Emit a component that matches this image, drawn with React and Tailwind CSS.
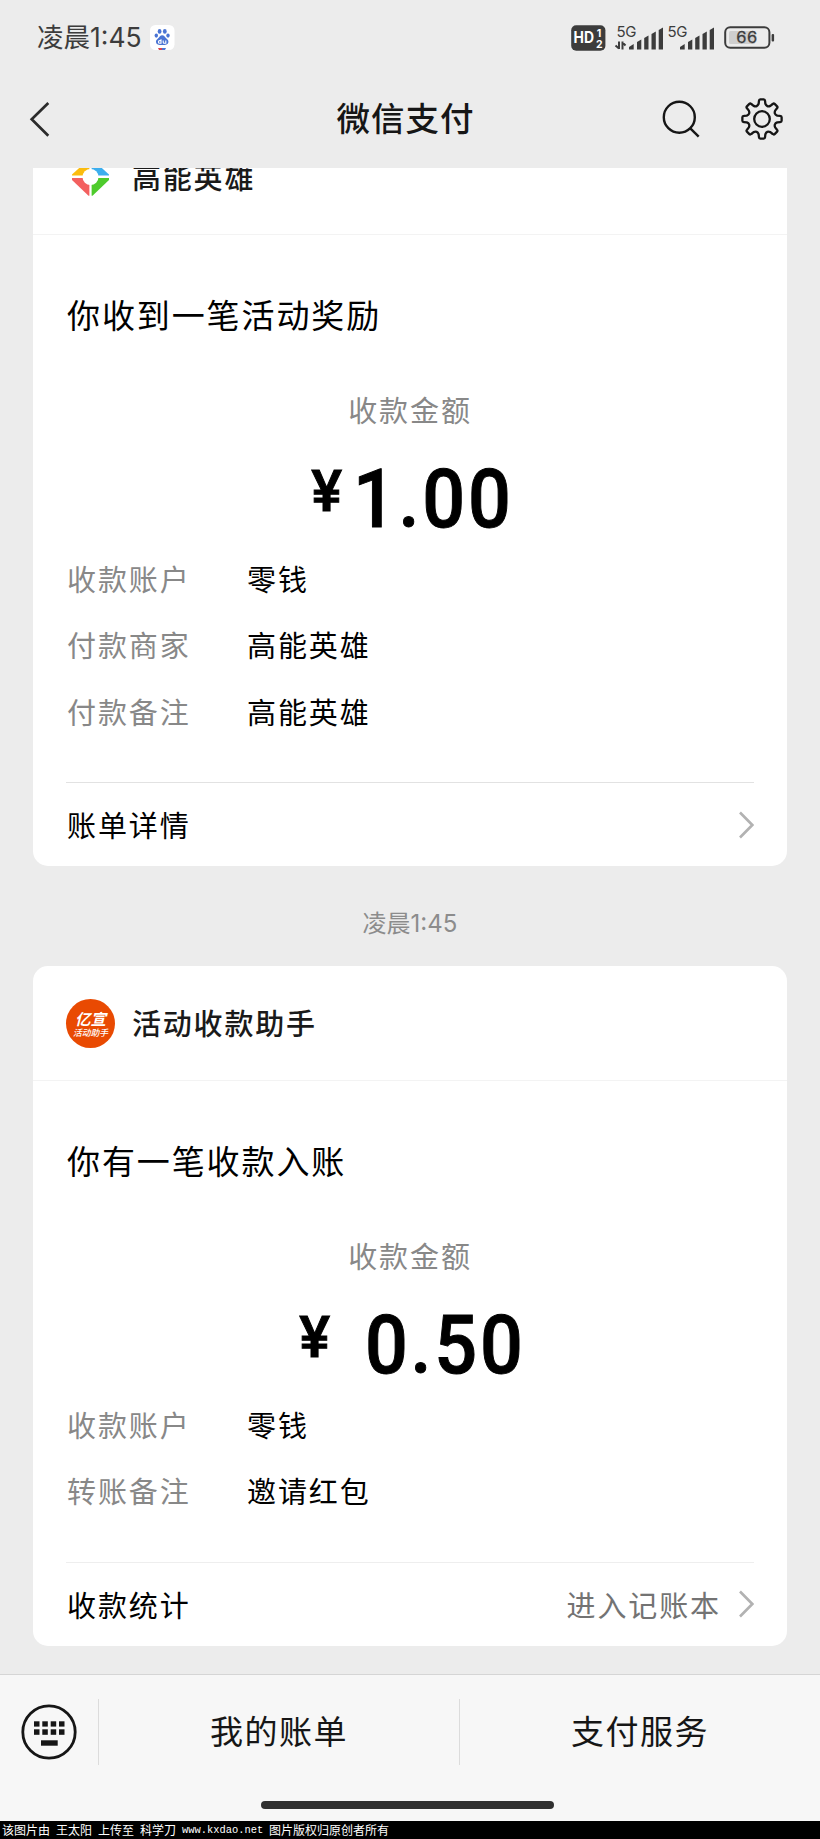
const GEAR_TEETH = 8;

// Outline of the settings cog, centred on 0,0
const gearPath = () => {
  const point = (radius, degrees) => {
    const a = ((degrees - 90) * Math.PI) / 180;
    return `${(radius * Math.cos(a)).toFixed(2)} ${(radius * Math.sin(a)).toFixed(2)}`;
  };
  let d = '';
  for (let i = 0; i < GEAR_TEETH; i++) {
    const a = i * 45;
    d += `${i === 0 ? 'M' : 'L'}${point(15.6, a - 12.5)} L${point(18.4, a - 9.5)} Q${point(19.8, a - 8.5)} ${point(19.7, a - 5)} `;
    d += `L${point(19.7, a + 5)} Q${point(19.8, a + 8.5)} ${point(18.4, a + 9.5)} L${point(15.6, a + 12.5)} `;
    d += `Q${point(12.6, a + 22.5)} ${point(15.6, a + 32.5)} `;
  }
  return `${d}Z`;
};

const GearIcon = () => (
  <svg className="h-[44px] w-[44px]" viewBox="-22 -22 44 44" fill="none" stroke="#161616" strokeWidth="2.3" strokeLinejoin="round">
    <path d={gearPath()} />
    <circle r="7.8" />
  </svg>
);

const BaiduIcon = () => (
  <svg className="h-[25px] w-[25px]" viewBox="0 0 25 25">
    <rect width="24.5" height="25" rx="5.5" fill="#fff" />
    <g fill="#4a74d4">
      <ellipse cx="9.6" cy="6.4" rx="1.9" ry="2.4" />
      <ellipse cx="14.8" cy="6.4" rx="1.9" ry="2.4" />
      <ellipse cx="6.3" cy="10.6" rx="1.7" ry="2.1" />
      <ellipse cx="18" cy="10.6" rx="1.7" ry="2.1" />
      <path d="M12.2 10.3c2 0 2.6 1.6 4 3 1.4 1.3 2.5 2.3 2.2 4-.4 2.3-2.5 2.8-6.2 2.8s-5.8-.5-6.2-2.8c-.3-1.7.8-2.7 2.2-4 1.4-1.4 2-3 4-3z" />
    </g>
    <path d="M11 14.2v4H9.7a1.3 1.3 0 010-2.6H11M13.2 15.5v1.7q0 1 1 1h1.6v-2.7" fill="none" stroke="#fff" strokeWidth="1.1" />
    <path d="M8 23h4v2H9z" fill="#d9434c" />
    <path d="M12 23h4l-1 2h-3z" fill="#4a74d4" />
  </svg>
);

const HdBadge = () => (
  <svg className="h-[26px] w-[35px] overflow-visible font-['Inter',sans-serif] font-bold" viewBox="0 0 35 26" fill="#fff">
    <rect x="0.2" y="0.3" width="34.2" height="25.5" rx="5" fill="#3c3c3c" />
    <text x="2.6" y="18.3" fontSize="15.5" textLength="20.5" lengthAdjust="spacingAndGlyphs">HD</text>
    <text x="25.8" y="12" fontSize="10.5">1</text>
    <text x="25" y="22.7" fontSize="10.5">2</text>
  </svg>
);

const Signal = ({ arrows }) => (
  <svg className="h-[26px] w-[51px] overflow-visible" viewBox="0 0 51 26" fill="#3c3c3c">
    <text x="2.4" y="11.7" fontSize="15" textLength="20" fontFamily="Inter, sans-serif">5G</text>
    <path d="M15 24.5V22l4.7-3v5.5z" />
    <path d="M23 24.5V17l4.3-2.5v10z" />
    <path d="M30.2 24.5V13l4.3-2.5v14z" />
    <path d="M37.5 24.5V9l4.3-2.5v18z" />
    <path d="M44.7 24.5V5L49 2.5v22z" />
    {arrows && (
      <path d="M5 16.5V24M8.500 16.500v8M5 23.500l-3.500-3M8.500 17.500l3 3" fill="none" stroke="#3c3c3c" strokeWidth="2" />
    )}
  </svg>
);

const Battery = () => (
  <svg className="h-[24px] w-[52px]" viewBox="0 0 52 24">
    <rect x="1.2" y="1.2" width="44.2" height="20.6" rx="5" fill="none" stroke="#3c3c3c" strokeWidth="2" />
    <rect x="5" y="5" width="26" height="13" rx="1.5" fill="#cfcfcf" />
    <rect x="47.6" y="8" width="2.5" height="7.5" rx="1" fill="#3c3c3c" />
    <text x="12.3" y="17.3" fontSize="16.5" textLength="21" fontFamily="Inter, sans-serif" fill="#3c3c3c" stroke="#3c3c3c" strokeWidth="0.3">66</text>
  </svg>
);

const GemLogo = () => (
  <svg className="h-[49px] w-[49px]" viewBox="0 0 49 49">
    <path d="M6 22.5v-1L22.500 6.500h.9v16H6z" fill="#fbbc0e" />
    <path d="M43 22.500v-1L26.500 6.500h-.9v16H43z" fill="#3caeee" />
    <path d="M6 25V27l16.500 15.700h.9V25z" fill="#f3605f" />
    <path d="M43 25V27L26.500 42.700h-.9V25z" fill="#4ecb2c" />
    <circle cx="24.500" cy="24" r="8" fill="#fff" />
  </svg>
);

const AssistantLogo = () => (
  <div className="flex h-[49px] w-[49px] flex-col items-center justify-center rounded-full bg-[#e94a02] text-white italic">
    <span className="mt-[2px] text-[15.5px] leading-[17px] font-bold">亿宣</span>
    <span className="text-[8.8px] leading-[11px] font-medium">活动助手</span>
  </div>
);

const Arrow = () => (
  <svg className="h-[28px] w-[15px]" viewBox="0 0 15 28" fill="none" stroke="#b2b2b2" strokeWidth="2.6">
    <path d="M1 1.5L13.3 14 1 26.5" />
  </svg>
);

const PaymentCard = ({ logo, name, title, amount, amountGap, rows, footer, footerHint, footerLine }) => (
  <section className="mx-[33px] overflow-hidden rounded-[15px] bg-white">
    <div className="flex h-[115px] items-center border-b border-[#f3f3f3] pl-[33px]">
      {logo}
      <span className="ml-[17px] text-[29px] font-medium tracking-[1.8px] text-[#1a1a1a]">{name}</span>
    </div>
    <div className="px-[33px]">
      <h2 className="mt-[54px] pl-px text-[33px] leading-[50px] tracking-[1.9px]">{title}</h2>
      <p className="mt-[50px] text-center text-[29px] leading-[40px] tracking-[1.9px] text-[#888]">收款金额</p>
      <div className="flex h-[88px] items-start justify-center pt-[30px] pl-[12px] font-['Roboto'] font-medium [-webkit-text-stroke:1px_black]">
        <span className="text-[58px] leading-[64px]">¥</span>
        <span className={`scale-x-[0.92] text-[82px] leading-[80px] tracking-[3px] ${amountGap}`}>{amount}</span>
      </div>
      <dl className="mt-[28px]">
        {rows.map(([label, value]) => (
          <div key={label} className="flex h-[66.6px] items-center pl-px text-[29px] tracking-[1.9px]">
            <dt className="w-[180px] text-[#888]">{label}</dt>
            <dd>{value}</dd>
          </div>
        ))}
      </dl>
      <div className={`mt-[37.4px] flex h-[84px] items-center border-t pl-px text-[29px] tracking-[1.9px] ${footerLine}`}>
        <span>{footer}</span>
        <span className="mr-[18px] ml-auto text-[#737373]">{footerHint}</span>
        <Arrow />
      </div>
    </div>
  </section>
);

const StatusBar = () => (
  <div className="flex h-[72px] items-center pt-[3px] pr-[44px] pl-[37px]">
    <span className="font-['Inter','Noto_Sans_CJK_SC',sans-serif] text-[26.5px] text-[#3c3c3c]">凌晨1:45</span>
    <div className="ml-[8px]">
      <BaiduIcon />
    </div>
    <div className="ml-auto flex items-center">
      <HdBadge />
      <div className="ml-[8px] flex">
        <Signal arrows />
        <Signal />
      </div>
      <div className="ml-[8px]">
        <Battery />
      </div>
    </div>
  </div>
);

const NavBar = () => (
  <div className="grid h-[96px] grid-cols-3 items-center pb-[3px]">
    <svg className="ml-[29px] h-[36px] w-[22px]" viewBox="0 0 22 36" fill="none" stroke="#2b2b2b" strokeWidth="2.7">
      <path d="M19.3 2L2.7 18.3l16.6 16.5" />
    </svg>
    <h1 className="pr-[9px] pb-[3px] text-center text-[33.5px] font-medium tracking-[1px] text-[#161616]">微信支付</h1>
    <div className="flex items-center justify-end pr-[36px]">
      <svg className="mr-[39px] h-[40px] w-[40px]" viewBox="0 0 40 40" fill="none" stroke="#161616" strokeWidth="2.4">
        <circle cx="18.3" cy="18.2" r="15.5" />
        <path d="M29.3 29.3l8.4 8.3" />
      </svg>
      <GearIcon />
    </div>
  </div>
);

const KeyboardIcon = () => (
  <svg className="h-[56px] w-[56px]" viewBox="0 0 56 56" fill="#161616">
    <circle cx="28" cy="28" r="26.2" fill="none" stroke="#161616" strokeWidth="2.8" />
    {[13, 21.3, 29.7, 38].map((x) => (
      <g key={x}>
        <rect x={x} y="17.3" width="5.5" height="5.3" />
        <rect x={x} y="25.3" width="5.5" height="5.5" />
      </g>
    ))}
    <rect x="20" y="36.3" width="16.7" height="5.4" />
  </svg>
);

const BottomBar = () => (
  <div className="h-[147px] border-t border-[#d5d5d5] bg-[#f7f7f7] pt-[24px]">
    <div className="flex h-[66px] items-center text-[33px] tracking-[1.5px] text-[#161616]">
      <div className="flex h-full w-[99px] items-center border-r border-[#dcdcdc] pl-[21px]">
        <KeyboardIcon />
      </div>
      <div className="flex h-full w-[361px] items-center justify-center border-r border-[#dcdcdc] pb-[2px]">我的账单</div>
      <div className="flex h-full flex-1 items-center justify-center pb-[2px]">支付服务</div>
    </div>
    <div className="mt-[36px] ml-[261px] h-[8px] w-[293px] rounded-full bg-[#303030]"></div>
  </div>
);

const App = () => (
  <div className="flex h-[1839px] w-[820px] flex-col overflow-hidden bg-[#ececec] font-['Noto_Sans_CJK_SC',sans-serif] text-black">
    <header>
      <StatusBar />
      <NavBar />
    </header>

    <main className="min-h-0 flex-1 overflow-hidden">
      {/* The first card is scrolled part way under the header */}
      <div className="-mt-[48px]">
        <PaymentCard
          logo={<GemLogo />}
          name="高能英雄"
          title="你收到一笔活动奖励"
          amount="1.00"
          amountGap="ml-[4px]"
          rows={[
            ['收款账户', '零钱'],
            ['付款商家', '高能英雄'],
            ['付款备注', '高能英雄'],
          ]}
          footer="账单详情"
          footerLine="border-[#e2e2e2]"
        />
        <p className="flex h-[100px] items-center justify-center pt-[16px] font-['Inter','Noto_Sans_CJK_SC',sans-serif] text-[24px] text-[#8c8c8c]">
          凌晨1:45
        </p>
        <PaymentCard
          logo={<AssistantLogo />}
          name="活动收款助手"
          title="你有一笔收款入账"
          amount="0.50"
          amountGap="ml-[28px]"
          rows={[
            ['收款账户', '零钱'],
            ['转账备注', '邀请红包'],
          ]}
          footer="收款统计"
          footerHint="进入记账本"
          footerLine="border-[#eeeeee]"
        />
      </div>
    </main>

    <BottomBar />
    <div className="flex h-[18px] items-center gap-[6px] bg-black pl-[2px] text-[12px] leading-[18px] text-white">
      <span>该图片由</span>
      <span>王太阳</span>
      <span>上传至</span>
      <span>科学刀</span>
      <span className="w-[81px] font-['Liberation_Mono',monospace] text-[10.4px]">www.kxdao.net</span>
      <span>图片版权归原创者所有</span>
    </div>
  </div>
);

export default App;
